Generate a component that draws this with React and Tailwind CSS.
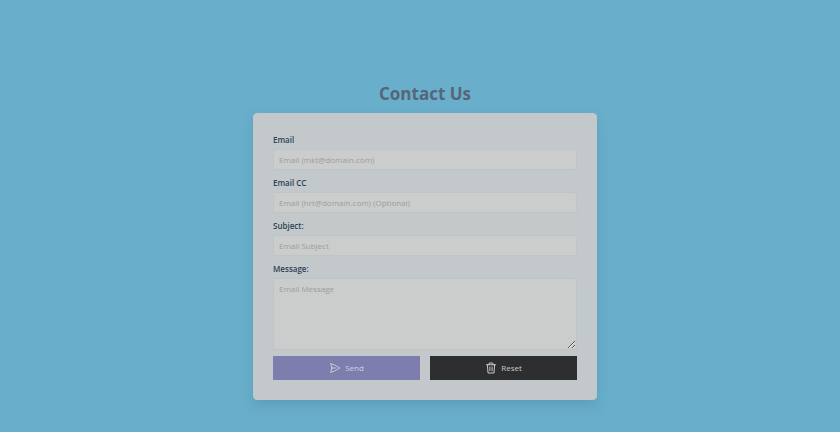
const inputClass =
  "block w-full rounded-[2px] border border-[#bec5c8] bg-[#cbcccc] px-[5px] text-[8px] leading-[12px] text-[#4b5563] placeholder:text-[#9b9da0] placeholder:opacity-100 outline-none focus:border-[#7d7eae]";

const labelClass = "block text-[8px] leading-[14px] font-semibold text-[#2c4254]";

function Field({ id, label, type = "text", placeholder }) {
  return (
    <div>
      <label htmlFor={id} className={labelClass}>
        {label}
      </label>
      <input id={id} name={id} type={type} placeholder={placeholder} className={inputClass + " mt-[2px] h-[21px]"} />
    </div>
  );
}

function SendIcon() {
  return (
    <svg viewBox="0 0 24 24" className="size-3" fill="none" stroke="currentColor" strokeWidth="1.8" strokeLinejoin="round" strokeLinecap="round" aria-hidden="true">
      <path d="M6 12 3.2 3.1A60 60 0 0 1 21.5 12 60 60 0 0 1 3.2 20.9L6 12Zm0 0h7.5" />
    </svg>
  );
}

function TrashIcon() {
  return (
    <svg viewBox="0 0 24 24" className="size-3" fill="none" stroke="currentColor" strokeWidth="2" strokeLinejoin="round" strokeLinecap="round" aria-hidden="true">
      <path d="M3 5.500h18M8 5.500 8.600 2h6.800l.6 3.500M4.800 5.500 6 22h12l1.200-16.500M9.800 10v7.500M14.200 10v7.500" />
    </svg>
  );
}

export default function App() {
  return (
    <main className="flex min-h-screen flex-col items-center bg-[#69afcb] pt-20 pb-8 pl-[10px] font-['Open_Sans','Noto_Sans',sans-serif]">
      <h1 className="text-[17px] leading-[28px] font-bold text-[#57657a]">Contact Us</h1>
      <form className="mt-[5px] w-full max-w-[344px] rounded-[4px] border border-[#c1c7ca] bg-[#c3c8cb] px-[19px] py-[19px] shadow-[0_6px_12px_rgba(50,110,140,0.25)]">
        <div className="flex flex-col gap-[6px]">
          <Field id="email" type="email" label="Email" placeholder="Email (mkt@domain.com)" />
          <Field id="email-cc" type="email" label="Email CC" placeholder="Email (hrt@domain.com) (Optional)" />
          <Field id="subject" label="Subject:" placeholder="Email Subject" />
          <div>
            <label htmlFor="message" className={labelClass}>
              Message:
            </label>
            <textarea id="message" name="message" placeholder="Email Message" className={inputClass + " mt-[2px] h-[72px] resize-y py-1"} />
          </div>
          <div className="grid grid-cols-2 gap-[10px]">
            <button type="submit" className="flex h-6 items-center justify-center gap-1 bg-[#7d7eae] text-[8px] leading-[12px] text-[#cfd1e2]">
              <SendIcon />
              Send
            </button>
            <button type="reset" className="flex h-6 items-center justify-center gap-1 bg-[#2d2e2f] text-[8px] leading-[12px] text-[#c8c9ca]">
              <TrashIcon />
              Reset
            </button>
          </div>
        </div>
      </form>
    </main>
  );
}
